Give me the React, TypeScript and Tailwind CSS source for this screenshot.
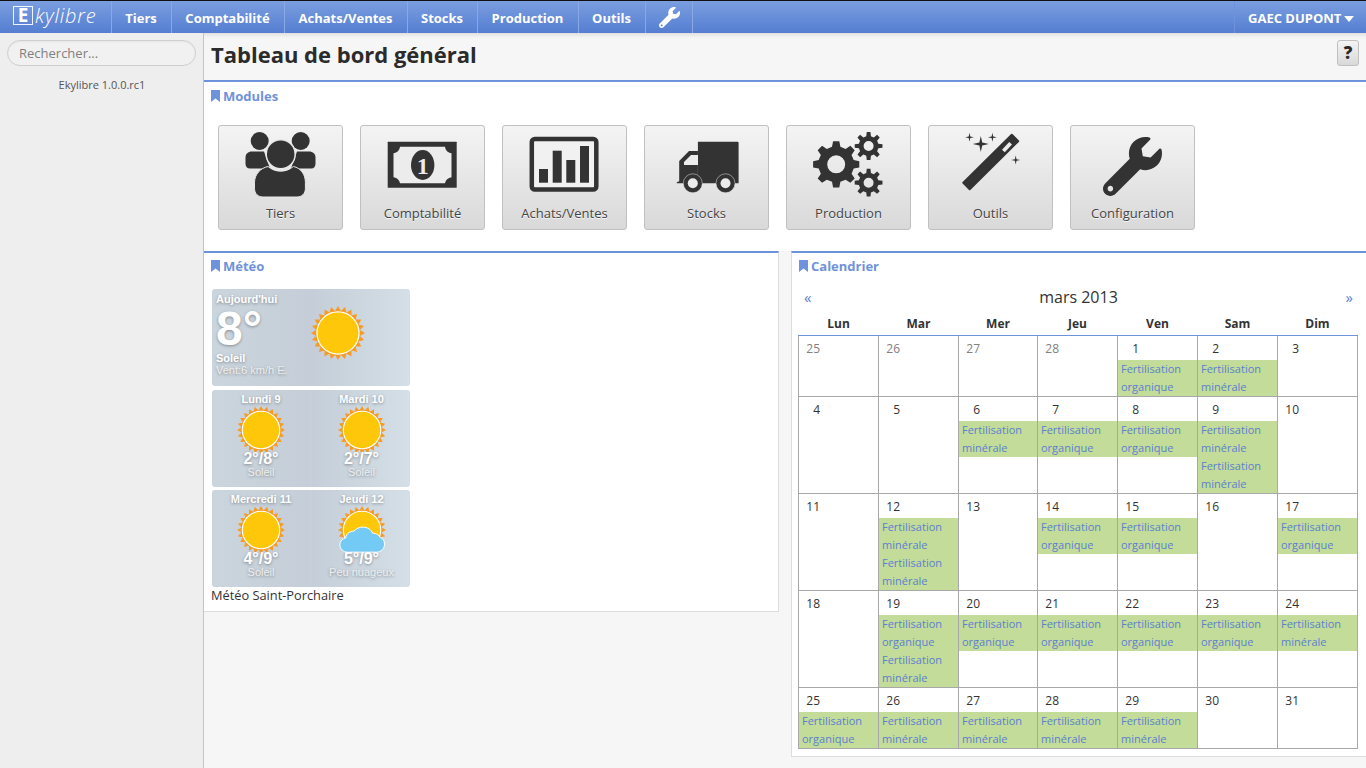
import React from "react";
import { FaWrench } from "react-icons/fa";

const DARK = "#333333";
const BTN_BG = "#e8e8e8";

function Bookmark() {
  return (
    <svg width="9" height="12" viewBox="0 0 9 12" className="shrink-0">
      <path d="M0 0h9v12L4.5 8.6 0 12z" fill="#6f92dc" />
    </svg>
  );
}

function WidgetTitle({ children }: { children: React.ReactNode }) {
  return (
    <div className="flex items-center gap-[3px] text-[13px] leading-[18px] font-bold text-[#6f92dc]">
      <Bookmark />
      <span>{children}</span>
    </div>
  );
}

function gearPath(cx: number, cy: number, teeth: number, ro: number, ri: number, hole: number) {
  const pts: string[] = [];
  const step = (Math.PI * 2) / teeth;
  for (let i = 0; i < teeth; i++) {
    const a = i * step - Math.PI / 2;
    const list: [number, number][] = [
      [ri, a - step * 0.3],
      [ro, a - step * 0.17],
      [ro, a + step * 0.17],
      [ri, a + step * 0.3],
    ];
    for (const [r, t] of list) pts.push(`${(cx + r * Math.cos(t)).toFixed(2)} ${(cy + r * Math.sin(t)).toFixed(2)}`);
  }
  return `M${pts.join("L")}Z M${cx - hole} ${cy}a${hole} ${hole} 0 1 0 ${hole * 2} 0a${hole} ${hole} 0 1 0 ${-hole * 2} 0Z`;
}

function star(cx: number, cy: number, r: number) {
  const k = r * 0.18;
  return `M${cx} ${cy - r}L${cx + k} ${cy - k}L${cx + r} ${cy}L${cx + k} ${cy + k}L${cx} ${cy + r}L${cx - k} ${cy + k}L${cx - r} ${cy}L${cx - k} ${cy - k}Z`;
}

const moduleIcons: Record<string, React.ReactNode> = {
  Tiers: (
    <g fill={DARK}>
      <circle cx="41.7" cy="16" r="9" />
      <circle cx="82.7" cy="16" r="9" />
      <path d="M34 26.5h12l6 17H32c-3 0-4.500-2-4.500-5v-6c0-3.500 2.500-6 6.500-6z" />
      <path d="M91 26.500H79l-6 17h20c3 0 4.500-2 4.500-5v-6c0-3.500-2.500-6-6.500-6z" />
      <circle cx="62.700" cy="29.300" r="14.500" stroke={BTN_BG} strokeWidth="1.500" />
      <path d="M50 41.500c3.500 3 8 4.700 12.700 4.700s9.200-1.700 12.700-4.700c7.500 1.500 12 8 12 16v6c0 5-3.500 8.500-8.500 8.500H45c-5 0-8.500-3.500-8.500-8.500v-6c0-8 6-14.500 13.500-16z" stroke={BTN_BG} strokeWidth="1" />
    </g>
  ),
  "Comptabilité": (
    <g>
      <rect x="27.700" y="16.700" width="69" height="46" fill={DARK} rx="0.500" />
      <path d="M40 21.700H85c.5 3.500 3 6 6.500 6.500v24c-3.500.5-6 3-6.500 6H40c-.5-3-3-5.500-6.500-6v-24c3.500-.5 6-3 6.500-6.500z" fill="#ececec" />
      <ellipse cx="62.700" cy="40" rx="11.700" ry="15" fill={DARK} />
      <text x="62.700" y="48.500" textAnchor="middle" fontSize="24" fontWeight="700" fontFamily="'Liberation Serif', serif" fill="#ececec">1</text>
    </g>
  ),
  "Achats/Ventes": (
    <g fill={DARK}>
      <rect x="29.800" y="14" width="64.500" height="50.500" rx="3" fill="#f1f1f1" stroke={DARK} strokeWidth="4.500" />
      <rect x="37" y="44" width="9" height="13.700" />
      <rect x="50.700" y="25.700" width="9" height="32" />
      <rect x="64.300" y="35" width="9" height="22.700" />
      <rect x="78" y="21" width="9" height="36.700" />
    </g>
  ),
  Stocks: (
    <g fill={DARK}>
      <path d="M53.900 16.700h39.500c.7 0 1.200.5 1.200 1.200v40.400H53.900z" />
      <path d="M53.900 26H45L35.200 36v20.300l-2.400 1v1h21.100z" />
      <path d="M40 40v-3l7-7h7v10z" fill="#ececec" />
      <circle cx="48.800" cy="58.300" r="9.500" stroke={BTN_BG} strokeWidth="0.500" />
      <circle cx="81.500" cy="58.300" r="9.500" stroke={BTN_BG} strokeWidth="0.500" />
      <circle cx="48.800" cy="58.300" r="5" fill="#ececec" />
      <circle cx="81.500" cy="58.300" r="5" fill="#ececec" />
    </g>
  ),
  Production: (
    <g fill={DARK} fillRule="evenodd">
      <path d={gearPath(50.200, 39.300, 8, 23.300, 18, 9)} />
      <path d={gearPath(82.600, 21, 8, 14, 10, 5)} />
      <path d={gearPath(82.600, 57.700, 8, 14, 10, 5)} />
    </g>
  ),
  Outils: (
    <g fill={DARK}>
      <path d="M90.200 16.200L83.800 9.800 35.300 57.800 41.700 64.200Z" stroke={DARK} strokeWidth="2" strokeLinejoin="round" />
      <line x1="82.600" y1="18.300" x2="75.400" y2="26" stroke="#ececec" strokeWidth="3.800" />
      <path d={star(52.800, 19, 8)} />
      <path d={star(41.500, 12.300, 4.500)} />
      <path d={star(64.400, 12.300, 4.500)} />
      <path d={star(87.700, 35, 4.500)} />
    </g>
  ),
};

function ModuleButton({ label }: { label: string }) {
  return (
    <div className="w-[125px] h-[105px] shrink-0 rounded-[3px] border border-[#c0c0c0] bg-linear-to-b from-[#f4f4f4] to-[#d9d9d9] flex flex-col items-center">
      {label === "Configuration" ? (
        <div className="h-[80px] w-full flex items-center justify-center">
          <FaWrench size={59} color={DARK} className="-ml-[1px]" />
        </div>
      ) : (
        <svg width="123" height="80" viewBox="1 1 123 80" className="shrink-0 overflow-visible">
          {moduleIcons[label]}
        </svg>
      )}
      <span className="text-[13px] leading-[18px] mt-[-2px] text-[#444] [text-shadow:0_1px_0_rgba(255,255,255,0.8)]">{label}</span>
    </div>
  );
}

function Sun({ size, cloud }: { size: number; cloud?: boolean }) {
  const spikes: string[] = [];
  const n = 24;
  for (let i = 0; i < n * 2; i++) {
    const r = i % 2 === 0 ? 25 : 20.500;
    const a = (i * Math.PI) / n - Math.PI / 2;
    spikes.push(`${(25 + r * Math.cos(a)).toFixed(2)},${(25 + r * Math.sin(a)).toFixed(2)}`);
  }
  return (
    <svg width={size} height={size} viewBox="0 0 50 50" className="shrink-0 overflow-visible">
      <polygon points={spikes.join(" ")} fill="#f69b25" />
      <circle cx="25" cy="25" r="19.500" fill="#fec70a" stroke="#ffffff" strokeWidth="1.200" />
      {cloud && (
        <path
          d="M10 48c-4.500 0-8-3-8-7.500 0-3.800 2.500-6.500 6-7.200 1-5 5-7.300 8.500-7 2.500-3 6-4.300 9.500-4.300 4.500 0 8.500 2.500 10 6.300 1.200-.2 6 .5 8 4.500 3 .8 4.500 3.700 4.500 6.800 0 4.900-3.800 8.400-8 8.400z"
          fill="#73cbf5"
          stroke="#ffffff"
          strokeWidth="1"
        />
      )}
    </svg>
  );
}

function Forecast({ day, temp, desc, cloud, first }: { day: string; temp: string; desc: string; cloud?: boolean; first?: boolean }) {
  return (
    <div className={`w-[99px] h-full flex flex-col items-center ${first ? "border-r border-[#c9d2da]" : "pl-[2px]"}`}>
      <div className="text-[11px] leading-[13px] font-bold mt-[3px]">{day}</div>
      <div><Sun size={48} cloud={cloud} /></div>
      <div className="text-[16px] leading-[16px] font-bold -mt-[3px]">{temp}</div>
      <div className="text-[11px] leading-[12px] text-[#eeeeee] -mt-[1px]">{desc}</div>
    </div>
  );
}

const cardCls =
  "w-[198px] h-[97px] rounded-[3px] bg-linear-to-r from-[#cbd5dd] via-[#c5ced8] to-[#d4dfe7] text-white font-['Liberation_Sans',sans-serif] [text-shadow:0_1px_3px_rgba(0,0,0,0.35)]";

type Ev = "o" | "m";
type Cell = { d: number; muted?: boolean; ev?: Ev[] };

const weeks: Cell[][] = [
  [{ d: 25, muted: true }, { d: 26, muted: true }, { d: 27, muted: true }, { d: 28, muted: true }, { d: 1, ev: ["o"] }, { d: 2, ev: ["m"] }, { d: 3 }],
  [{ d: 4 }, { d: 5 }, { d: 6, ev: ["m"] }, { d: 7, ev: ["o"] }, { d: 8, ev: ["o"] }, { d: 9, ev: ["m", "m"] }, { d: 10 }],
  [{ d: 11 }, { d: 12, ev: ["m", "m"] }, { d: 13 }, { d: 14, ev: ["o"] }, { d: 15, ev: ["o"] }, { d: 16 }, { d: 17, ev: ["o"] }],
  [{ d: 18 }, { d: 19, ev: ["o", "m"] }, { d: 20, ev: ["o"] }, { d: 21, ev: ["o"] }, { d: 22, ev: ["o"] }, { d: 23, ev: ["o"] }, { d: 24, ev: ["m"] }],
  [{ d: 25, ev: ["o"] }, { d: 26, ev: ["m"] }, { d: 27, ev: ["m"] }, { d: 28, ev: ["m"] }, { d: 29, ev: ["m"] }, { d: 30 }, { d: 31 }],
];
const rowHeights = ["h-[61px]", "h-[97px]", "h-[97px]", "h-[97px]", "h-[61px]"];
const colWidths = ["w-[80px]", "w-[80px]", "w-[79px]", "w-[80px]", "w-[80px]", "w-[80px]", "w-[80px]"];
const dayNames = ["Lun", "Mar", "Mer", "Jeu", "Ven", "Sam", "Dim"];
const navItems = [
  { label: "Tiers", w: "w-[60px]" },
  { label: "Comptabilité", w: "w-[113px]" },
  { label: "Achats/Ventes", w: "w-[123px]" },
  { label: "Stocks", w: "w-[70px]" },
  { label: "Production", w: "w-[101px]" },
  { label: "Outils", w: "w-[67px]" },
];
const modules = ["Tiers", "Comptabilité", "Achats/Ventes", "Stocks", "Production", "Outils", "Configuration"];

export default function App() {
  return (
    <div className="h-[768px] w-[1366px] overflow-hidden flex flex-col bg-[#f6f6f6] font-['Open_Sans',sans-serif] text-[#333]">
      <nav className="h-[33px] shrink-0 flex border-t border-[#111] bg-linear-to-b from-[#7b9ee0] to-[#557ed1] text-white text-[13px] font-bold">
        <div className="w-[111px] flex items-center pl-[13px] pb-[3px] gap-[2px]">
          <div className="w-[20px] h-[19px] border border-white/90 flex items-center justify-center text-[19px] leading-none font-bold">E</div>
          <span className="text-[20px] leading-none font-light italic tracking-[0.8px]">kylibre</span>
        </div>
        {navItems.map((n) => (
          <div key={n.label} className={`${n.w} border-l border-[#8aa8e4] flex items-center justify-center pt-[3px] pr-[1px]`}>{n.label}</div>
        ))}
        <div className="w-[48px] border-l border-r border-[#8aa8e4] flex items-center justify-center">
          <FaWrench size={21} color="#ffffff" />
        </div>
        <div className="flex-1" />
        <div className="w-[132px] border-l border-[#6f92dc] flex items-center pl-[13px] pt-[3px] gap-[3px]">
          <span>GAEC DUPONT</span>
          <svg width="10" height="6" viewBox="0 0 10 6"><path d="M0 0h10L5 6z" fill="#fff" /></svg>
        </div>
      </nav>

      <div className="flex-1 flex min-h-0">
        <aside className="w-[204px] shrink-0 bg-[#eeeeee] border-r border-[#c4c4c4] flex flex-col">
          <div className="mt-[7px] mx-[7px] w-[189px] h-[26px] rounded-full border border-[#cfcfcf] bg-[#f1f1f1] shadow-[inset_0_1px_2px_rgba(0,0,0,0.05)] flex items-center pl-[11px] pt-[2px] text-[13px] text-[#808080]">
            Rechercher...
          </div>
          <div className="mt-[10px] pl-[1px] text-center text-[11px] leading-[18px] text-[#555]">Ekylibre 1.0.0.rc1</div>
        </aside>

        <main className="flex-1 min-w-0 flex flex-col">
          <header className="h-[49px] shrink-0 border-b-2 border-[#6f92dc] flex items-start justify-between pl-[7px] pr-[7px] shadow-[inset_0_6px_6px_-6px_rgba(0,0,0,0.18)]">
            <h1 className="text-[22px] leading-[30px] font-bold text-[#2b2b2b] mt-[6px]">Tableau de bord général</h1>
            <div className="mt-[7px] w-[22px] h-[26px] rounded-[3px] border border-[#c0c0c0] bg-linear-to-b from-[#f4f4f4] to-[#d9d9d9] flex items-center justify-center text-[17px] font-extrabold text-[#2b2b2b]">?</div>
          </header>

          <section className="h-[169px] shrink-0 bg-white pt-[5px] pl-[7px]">
            <WidgetTitle>Modules</WidgetTitle>
            <div className="flex gap-[17px] mt-[20px] ml-[7px]">
              {modules.map((m) => <ModuleButton key={m} label={m} />)}
            </div>
          </section>

          <div className="flex gap-[12px] items-start">
            <section className="w-[575px] h-[361px] bg-white border-t-2 border-[#6f92dc] border-r border-b border-r-[#dddddd] border-b-[#dddddd] pt-[4px] pl-[7px]">
              <WidgetTitle>Météo</WidgetTitle>
              <div className="ml-[1px] mt-[14px] flex flex-col gap-[3.500px]">
                <div className={`${cardCls} relative pl-[4px] pt-[3px] flex`}>
                  <div className="w-[90px] flex flex-col">
                    <div className="text-[11px] leading-[13px] font-bold mt-[1px]">Aujourd'hui</div>
                    <div className="text-[48px] leading-[46px] font-bold h-[46px]">8°</div>
                    <div className="text-[11px] leading-[12px] font-bold">Soleil</div>
                    <div className="text-[11px] leading-[12px] text-[#eeeeee]">Vent:6 km/h E.</div>
                  </div>
                  <div className="ml-[5px] mt-[14px]"><Sun size={54} /></div>
                </div>
                <div className={`${cardCls} flex`}>
                  <Forecast day="Lundi 9" temp="2°/8°" desc="Soleil" first />
                  <Forecast day="Mardi 10" temp="2°/7°" desc="Soleil" />
                </div>
                <div className={`${cardCls} flex`}>
                  <Forecast day="Mercredi 11" temp="4°/9°" desc="Soleil" first />
                  <Forecast day="Jeudi 12" temp="5°/9°" desc="Peu nuageux" cloud />
                </div>
              </div>
              <div className="text-[12.800px] leading-[18px] mt-[-1px] text-[#333]">Météo Saint-Porchaire</div>
            </section>

            <section className="w-[575px] h-[506px] bg-white border-t-2 border-[#6f92dc] border-l border-b border-l-[#dddddd] border-b-[#dddddd] pt-[4px] pl-[6px]">
              <div className="pl-[1px]"><WidgetTitle>Calendrier</WidgetTitle></div>
              <div className="w-[561px] flex items-center justify-between px-[6px] mt-[10px] h-[24px] text-[#5b80cf]">
                <span className="text-[15px]">«</span>
                <span className="text-[16px] text-[#333] font-normal">mars 2013</span>
                <span className="text-[15px]">»</span>
              </div>
              <table className="table-fixed border-collapse w-[559px] mt-[1px]">
                <thead>
                  <tr className="h-[25px]">
                    {dayNames.map((d, i) => (
                      <th key={d} className={`${colWidths[i]} p-0 pt-[4px] text-[12px] font-bold text-[#333] text-center border-b border-[#6f92dc]`}>{d}</th>
                    ))}
                  </tr>
                </thead>
                <tbody>
                  {weeks.map((w, ri) => (
                    <tr key={ri} className={rowHeights[ri]}>
                      {w.map((c, ci) => (
                        <td key={ci} className="p-0 align-top border border-[#a8a8a8]">
                          <div className={`h-[24px] w-[21px] pt-[4px] text-right text-[12px] leading-[18px] ${c.muted ? "text-[#808080]" : "text-[#333]"}`}>{c.d}</div>
                          {c.ev && c.ev.map((e, i) => (
                            <div key={i} className="bg-[#c3dc99] pl-[3px] text-[11px] leading-[18px] text-[#5b80cf]">
                              Fertilisation<br />{e === "o" ? "organique" : "minérale"}
                            </div>
                          ))}
                        </td>
                      ))}
                    </tr>
                  ))}
                </tbody>
              </table>
            </section>
          </div>
        </main>
      </div>
    </div>
  );
}
